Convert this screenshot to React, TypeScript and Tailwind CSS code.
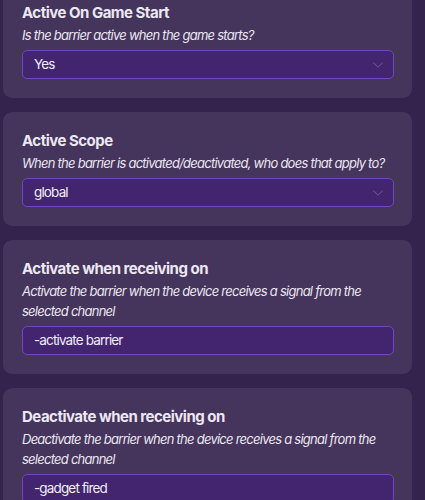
import { ChevronDown } from "lucide-react";

type FieldProps = {
  title: string;
  description: string;
  value: string;
  select?: boolean;
};

const Field = ({ title, description, value, select }: FieldProps) => {
  return (
    <div className="rounded-[9px] bg-[#45345c] pl-[19px] pr-[18px] pt-[17px] pb-[19px]">
      <h2 className="text-[15px] leading-[24px] font-bold tracking-[-0.5px] text-[#ece8f2]">{title}</h2>
      <p className="text-[13px] leading-[20px] italic tracking-[-0.75px] text-[#ebe7f1]">{description}</p>
      <div className="mt-[5px] flex h-[29px] items-center justify-between rounded-[5px] border border-[#7346c6] bg-[#42246f] pl-[11px] pr-[6px]">
        <span className="text-[13.5px] tracking-[-0.85px] text-[#f1edf6]">{value}</span>
        {select && (
          <ChevronDown className="h-[18px] w-[18px] text-[#7d68a3]" strokeWidth={1.1} />
        )}
      </div>
    </div>
  );
};

export default function App() {
  return (
    <div
      className="h-[500px] w-[425px] overflow-hidden bg-[#33234d]"
      style={{ fontFamily: "Inter, 'Noto Sans', sans-serif" }}
    >
      <div className="-mt-[16px] flex w-[412px] flex-col gap-[14px] pl-[3px]">
        <Field
          title="Active On Game Start"
          description="Is the barrier active when the game starts?"
          value="Yes"
          select
        />
        <Field
          title="Active Scope"
          description="When the barrier is activated/deactivated, who does that apply to?"
          value="global"
          select
        />
        <Field
          title="Activate when receiving on"
          description="Activate the barrier when the device receives a signal from the selected channel"
          value="-activate barrier"
        />
        <Field
          title="Deactivate when receiving on"
          description="Deactivate the barrier when the device receives a signal from the selected channel"
          value="-gadget fired"
        />
      </div>
    </div>
  );
}
